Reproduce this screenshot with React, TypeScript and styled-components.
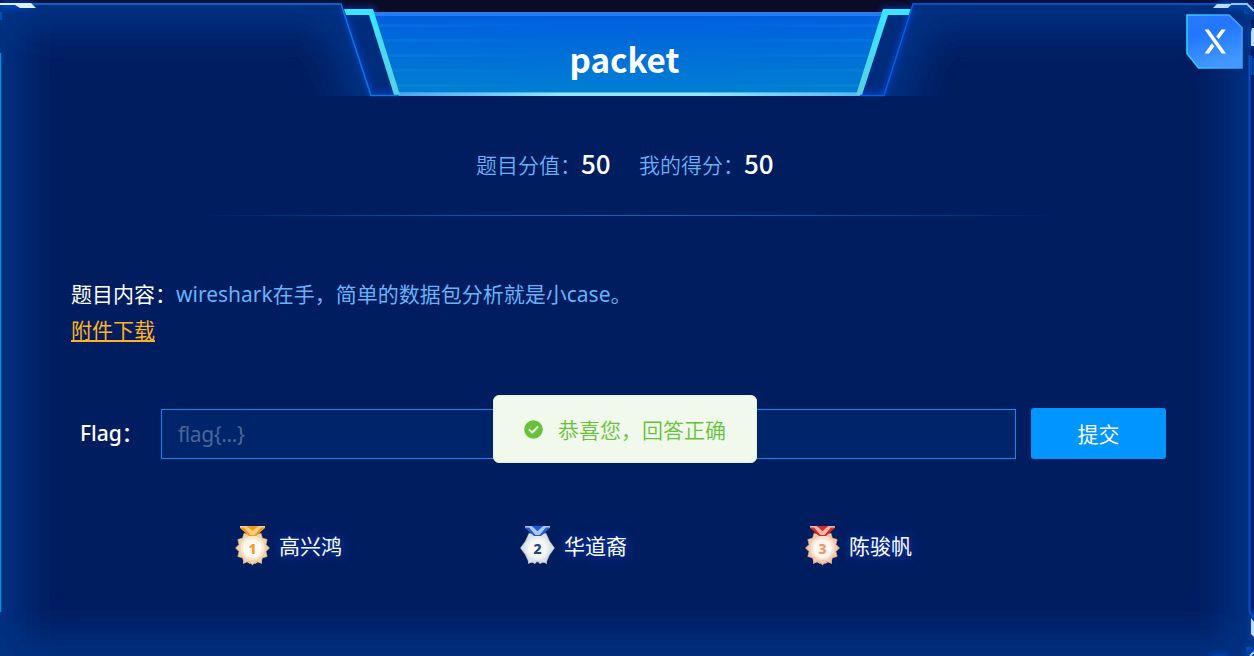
import React from 'react';
import styled, { createGlobalStyle } from 'styled-components';

const GlobalStyle = createGlobalStyle`
  * { box-sizing: border-box; }
  body {
    margin: 0;
    overflow: hidden;
    background: #0a0b26;
    font-family: 'Noto Sans', 'Noto Sans CJK SC', sans-serif;
  }
`;

const Dialog = styled.main`
  position: relative;
  isolation: isolate;
  display: flex;
  flex-direction: column;
  width: 1254px;
  height: 656px;
  overflow: hidden;
  color: #fff;
  font-size: 21px;
`;

const FrameArt = styled.svg`
  position: absolute;
  inset: 0;
  z-index: -1;
`;

const Header = styled.header`
  display: flex;
  justify-content: center;
  height: 96px;
  padding-top: 35px;
`;

const Title = styled.h1`
  margin: 0 5px 0 0;
  font-family: 'Noto Sans CJK SC', sans-serif;
  font-size: 33.2px;
  line-height: 48px;
  font-weight: 700;
  white-space: nowrap;
`;

const CloseButton = styled.button`
  position: absolute;
  top: 14px;
  right: 11px;
  width: 57px;
  height: 55px;
  padding: 0;
  border: 0;
  background: none;
  svg { display: block; }
`;

const Scores = styled.section`
  display: flex;
  height: 119px;
  padding: 48px 0 0 476px;
`;

const Score = styled.div<{ $width: number }>`
  display: flex;
  width: ${(p) => p.$width}px;
  line-height: 40px;
  color: #69b1f8;
  white-space: nowrap;
`;

const ScoreLabel = styled.span`
  width: 105px;
  font-family: 'Noto Sans CJK SC', sans-serif;
  font-weight: 350;
`;

const ScoreValue = styled.strong`
  color: #fff;
  font-family: 'Noto Sans CJK SC', sans-serif;
  font-size: 26px;
  font-weight: 500;
  line-height: 38px;
`;

const Divider = styled.div`
  height: 1px;
  margin: 0 195px;
  background: linear-gradient(90deg, transparent, #0756a8 30%, #0868bd 50%, #0756a8 70%, transparent);
`;

const Content = styled.section`
  height: 192px;
  padding: 60px 71px 0;
  line-height: 36px;
`;

const Question = styled.p`
  display: flex;
  margin: 0;
  height: 36px;
  white-space: nowrap;
`;

const QuestionLabel = styled.span`
  width: 105px;
  flex: none;
`;

const QuestionText = styled.span`
  color: #69b1f8;
`;

const Download = styled.a`
  display: block;
  width: 85px;
  color: #ffb222;
  text-decoration: underline;
  text-decoration-thickness: 2px;
  text-underline-offset: 2px;
`;

const AnswerForm = styled.form`
  display: flex;
  height: 51px;
  padding-left: 80px;
`;

const FlagLabel = styled.label`
  width: 81px;
  line-height: 51px;
  font-weight: 500;
`;

const FlagInput = styled.input`
  width: 855px;
  height: 50px;
  margin: 1px 15px 0 0;
  padding: 0 16px;
  border: 1px solid #078bef;
  background: #002469;
  color: #fff;
  font: inherit;
  letter-spacing: -0.4px;
  outline: none;
  &::placeholder { color: #48669b; opacity: 1; }
`;

const Submit = styled.button`
  width: 135px;
  height: 51px;
  padding: 0 0 1px;
  border: 0;
  border-radius: 3px;
  background: #0095ff;
  color: #fff;
  font: inherit;
`;

const Toast = styled.div`
  position: absolute;
  top: 395px;
  left: 493px;
  display: flex;
  align-items: center;
  width: 264px;
  height: 68px;
  padding-left: 29.5px;
  border: 1px solid #e1f3d8;
  border-radius: 6px;
  background: #f0f9eb;
  color: #67c23a;
  font-family: 'Noto Sans CJK SC', sans-serif;
  font-weight: 350;
  white-space: nowrap;
  svg { margin-right: 15.5px; flex: none; }
`;

const Ranking = styled.section`
  display: flex;
  padding: 66px 0 0 235px;
`;

const Winner = styled.div`
  display: flex;
  width: 285px;
  height: 42px;
  line-height: 42px;
  text-shadow: 0 0 12px rgba(21, 80, 255, 0.8);
  svg { flex: none; margin-right: 9px; text-shadow: none; }
`;

type MedalColors = { rim: string; edge: string; face: string; ink: string; ribbon: string; tail: string };

const MEDALS: MedalColors[] = [
  { rim: '#f0d4a9', edge: '#d6ae78', face: '#fffaf2', ink: '#f29a2e', ribbon: '#f39a1c', tail: '#ffe3a8' },
  { rim: '#dde2e8', edge: '#aeb6c2', face: '#f6f7f8', ink: '#23457f', ribbon: '#1c5fd8', tail: '#dcecff' },
  { rim: '#f3c9ae', edge: '#d9a283', face: '#fff6f0', ink: '#ea9870', ribbon: '#cf2f24', tail: '#ffe4dc' },
];

const WINNERS = ['高兴鸿', '华道裔', '陈骏帆'];

function Medal({ place }: { place: number }) {
  const c = MEDALS[place - 1];
  const count = place === 2 ? 6 : 12;
  const spikes = Array.from({ length: count * 2 }, (_, i) => {
    const a = (i * Math.PI) / count;
    const r = i % 2 ? (place === 2 ? 13.8 : 14) : 17;
    return `${(17.5 + r * Math.cos(a)).toFixed(1)},${(23 + r * Math.sin(a)).toFixed(1)}`;
  }).join(' ');
  return (
    <svg width="35" height="41" viewBox="0 0 35 41">
      <path d="M9 32 L8 39 L12 37 L15 39 L17.500 36 L20 39 L23 37 L27 39 L26 32Z" fill={c.rim} />
      <polygon points={spikes} fill={c.rim} stroke={c.edge} strokeWidth="0.6" strokeLinejoin="round" />
      <circle cx="17.500" cy="23" r="12" fill={c.face} opacity="0.55" />
      <circle cx="17.500" cy="23.500" r="9.500" fill={c.face} />
      <path d="M5 1 H30 V3 L21 11 H14 L5 3Z" fill={c.ribbon} />
      <path d="M5 1 H12 L17.500 6 L23 1 H30 V2.500 H26 L19.500 10 H15.500 L9 2.500 H5Z" fill={c.tail} opacity="0.75" />
      <path d="M12 1 H23 L17.500 6Z" fill={c.ribbon} />
      <text x="17.500" y="28.500" textAnchor="middle" fontFamily="Noto Sans" fontSize="14" fontWeight="800" fill={c.ink}>
        {place}
      </text>
    </svg>
  );
}

function Frame() {
  return (
    <FrameArt width="1254" height="656" viewBox="0 0 1254 656">
      <defs>
        <clipPath id="upper">
          <path d="M0 3H341L372 96H0Z M913 3H1244L1254 13V96H884Z" />
        </clipPath>
        <clipPath id="lower"><path d="M0 96H1254V656H0Z" /></clipPath>
        <filter id="soft" filterUnits="userSpaceOnUse" x="-100" y="-100" width="1454" height="900">
          <feGaussianBlur stdDeviation="18" />
        </filter>
        <filter id="halo" filterUnits="userSpaceOnUse" x="-20" y="-20" width="1300" height="720">
          <feGaussianBlur stdDeviation="3" />
        </filter>
        <linearGradient id="banner" x2="0" y2="1">
          <stop offset="0" stopColor="#005edf" />
          <stop offset="1" stopColor="#0080d1" />
        </linearGradient>
        <linearGradient id="brace" x2="0" y2="1">
          <stop offset="0" stopColor="#38e6ff" />
          <stop offset="1" stopColor="#57cfe2" />
        </linearGradient>
        <linearGradient id="shine">
          <stop offset="0" stopColor="#4aa4f2" />
          <stop offset="0.35" stopColor="#8eeaff" />
          <stop offset="0.65" stopColor="#8eeaff" />
          <stop offset="1" stopColor="#58b6f2" />
        </linearGradient>
        <linearGradient id="streakLeft">
          <stop offset="0" stopColor="#13a0ee" stopOpacity="0.2" />
          <stop offset="1" stopColor="#13a0ee" stopOpacity="0" />
        </linearGradient>
        <linearGradient id="streakRight">
          <stop offset="0" stopColor="#13a0ee" stopOpacity="0" />
          <stop offset="1" stopColor="#13a0ee" stopOpacity="0.2" />
        </linearGradient>
        <clipPath id="bannerShape"><path d="M373 12H886L860 96H399Z" /></clipPath>
      </defs>

      <path d="M0 0H345V8H0Z M909 0H1254V8H909Z" fill="#08144a" opacity="0.6" />
      <path d="M0 3H341L372 96H884L913 3H1244L1254 13V656H0Z" fill="#001d60" />
      <g clipPath="url(#upper)">
        <g filter="url(#soft)" fill="none" stroke="#003384" strokeWidth="54">
          <path d="M-4 170V3H341L390 150" />
          <path d="M865 150L913 3H1254V170" />
        </g>
      </g>
      <g clipPath="url(#lower)">
        <path d="M-4 -60V664H1254V-60" filter="url(#soft)" fill="none" stroke="#003384" strokeWidth="54" />
      </g>

      <path d="M343 9H373L400 96H371Z M883 9H911L884 96H858Z" fill="#002c7c" />
      <g filter="url(#halo)" fill="none" stroke="#0050ff" strokeWidth="3" opacity="0.8">
        <path d="M344 10L371 94H398L373 9H344" />
        <path d="M911 10L884 94H858L884 9H911" />
      </g>
      <path d="M360 96H895V110H360Z" fill="#001d60" />
      <path d="M373 12H886L860 96H399Z" fill="url(#banner)" />
      <g clipPath="url(#bannerShape)">
        <path d="M373 12H886V16H373Z" fill="#247df0" />
        {[24, 39, 54, 69, 84].map((y) => (
          <g key={y}>
            <rect x="374" y={y} width="190" height="3" fill="url(#streakLeft)" />
            <rect x="695" y={y} width="190" height="3" fill="url(#streakRight)" />
          </g>
        ))}
        <rect x="399" y="92" width="465" height="4" fill="url(#shine)" />
        <rect x="399" y="92" width="465" height="1" fill="#299ae4" opacity="0.6" />
      </g>
      <path d="M344 9H373L400 95H394L369 15H346Z" fill="url(#brace)" />
      <path d="M911 9H883L856 95H862L888 15H909Z" fill="url(#brace)" />
      <path d="M12 4H341L371 95.500H399" fill="none" stroke="#057bdd" strokeWidth="1.500" />
      <path d="M1235 4H913L884 95.500H860" fill="none" stroke="#0560e0" strokeWidth="1.500" />

      <path d="M0.500 53V612" stroke="#0090dd" strokeWidth="1.500" />
      <path d="M0 12H2V20H0Z" fill="#0050b5" />
      <path d="M0 4.500H32" stroke="#0058ff" strokeWidth="7" filter="url(#halo)" opacity="0.6" />
      <path d="M0 3H31L36 8H20L15 5H0Z" fill="#dcefff" />

      <path d="M1251 20H1254V610H1251Z" fill="#001d63" />
      <path d="M1249.500 55V612L1254 617" fill="none" stroke="#0050d8" strokeWidth="1.800" />
      <path d="M1251.500 56V75M1254 58V75" stroke="#004aa9" strokeWidth="2" />
      <g filter="url(#halo)" fill="none" stroke="#005cff" strokeWidth="6" opacity="0.7">
        <path d="M1218 4H1247L1254 12M1253 28V46" />
      </g>
      <path d="M1217 4H1232L1228 8H1213Z" fill="#b9dcff" />
      <path d="M1231 4H1247L1254 11" fill="none" stroke="#98c5ff" strokeWidth="2" />
      <path d="M1254 28H1252L1251 32V46H1254Z" fill="#c0dcff" />
      <path d="M1244 9L1249 14H1244Z" fill="#00509d" />
      <g filter="url(#halo)" fill="none" stroke="#0060ff" strokeWidth="5" opacity="0.7">
        <path d="M1254 616V638M1211 658H1228M1247 656L1254 648" />
      </g>
      <path d="M1251 618L1254 622V637L1251 634Z" fill="#c1dcff" />
      <path d="M1246 647H1251L1246 652Z" fill="#0052ae" />
      <path d="M1250 656L1254 652" stroke="#a9ceff" strokeWidth="2" />
    </FrameArt>
  );
}

function CloseIcon() {
  return (
    <svg width="57" height="55" viewBox="0 0 57 55">
      <defs>
        <linearGradient id="closeFill" x2="0.3" y2="1">
          <stop offset="0" stopColor="#2878ff" />
          <stop offset="0.4" stopColor="#2277ff" />
          <stop offset="1" stopColor="#4298ff" />
        </linearGradient>
        <linearGradient id="closeEdge">
          <stop offset="0" stopColor="#2bd1ff" />
          <stop offset="1" stopColor="#3d9cff" />
        </linearGradient>
      </defs>
      <path d="M1 1H43L56 13.500V54H12.500L1 39.500Z" fill="url(#closeFill)" stroke="url(#closeEdge)" strokeWidth="1.600" />
      <path d="M18.500 15.500H22.700L40 39.500H35.800Z" fill="#fff" />
      <path d="M35.500 15.500H39.800L32.700 25.300L30.300 22.300ZM26 29.300L28.300 32.500L23 39.500H18.500Z" fill="#fff" />
    </svg>
  );
}

export default function App() {
  return (
    <>
      <GlobalStyle />
      <Dialog>
        <Frame />
        <Header>
          <Title>packet</Title>
        </Header>
        <CloseButton type="button" aria-label="关闭"><CloseIcon /></CloseButton>
        <Scores>
          <Score $width={163}><ScoreLabel>题目分值：</ScoreLabel><ScoreValue>50</ScoreValue></Score>
          <Score $width={140}><ScoreLabel>我的得分：</ScoreLabel><ScoreValue>50</ScoreValue></Score>
        </Scores>
        <Divider />
        <Content>
          <Question>
            <QuestionLabel>题目内容：</QuestionLabel>
            <QuestionText>wireshark在手，简单的数据包分析就是小case。</QuestionText>
          </Question>
          <Download>附件下载</Download>
        </Content>
        <AnswerForm>
          <FlagLabel htmlFor="flag">Flag：</FlagLabel>
          <FlagInput id="flag" placeholder="flag{...}" />
          <Submit type="button">提交</Submit>
        </AnswerForm>
        <Ranking>
          {WINNERS.map((name, i) => (
            <Winner key={name}><Medal place={i + 1} />{name}</Winner>
          ))}
        </Ranking>
        <Toast>
          <svg width="19" height="19" viewBox="0 0 19 19">
            <circle cx="9.500" cy="9.500" r="9.300" fill="#67c23a" />
            <path d="M5.400 9.800L8.300 12.500L13.700 7" fill="none" stroke="#f0f9eb" strokeWidth="1.800" strokeLinecap="round" strokeLinejoin="round" />
          </svg>
          恭喜您，回答正确
        </Toast>
      </Dialog>
    </>
  );
}
